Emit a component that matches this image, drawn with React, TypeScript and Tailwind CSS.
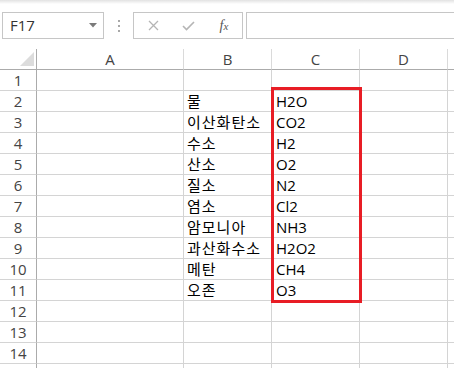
import React from "react";

const rows: [string, string][] = [
  ["", ""],
  ["물", "H2O"],
  ["이산화탄소", "CO2"],
  ["수소", "H2"],
  ["산소", "O2"],
  ["질소", "N2"],
  ["염소", "Cl2"],
  ["암모니아", "NH3"],
  ["과산화수소", "H2O2"],
  ["메탄", "CH4"],
  ["오존", "O3"],
  ["", ""],
  ["", ""],
  ["", ""],
];

const gridCols = "grid grid-cols-[37px_147px_88px_88px_88px_1fr]";
const uiFont = "font-['Open_Sans','Noto_Sans',sans-serif]";
const cellFont = "font-['Open_Sans','Noto_Sans_CJK_KR',sans-serif]";

function Toolbar() {
  return (
    <div className="h-[49px] bg-white">
      <div className="h-[4px] bg-gradient-to-b from-[#e2e2e2] to-white" />
      <div className="flex items-start pt-[8px]">
        {/* name box */}
        <div className="ml-[2px] flex h-[27px] w-[102px] items-center justify-between border border-[#c6c6c6] bg-white pl-[7px] pr-[6px]">
          <span className={`${uiFont} text-[15px] text-[#333]`}>F17</span>
          <svg width="8" height="5" viewBox="0 0 8 5">
            <path d="M0 0 L8 0 L4 4.5 Z" fill="#7a7a7a" />
          </svg>
        </div>
        {/* dots */}
        <div className="ml-[14px] flex h-[27px] flex-col items-center justify-center gap-[3px]">
          <span className="block h-[2px] w-[2px] bg-[#a8a8a8]" />
          <span className="block h-[2px] w-[2px] bg-[#a8a8a8]" />
          <span className="block h-[2px] w-[2px] bg-[#a8a8a8]" />
        </div>
        {/* formula buttons */}
        <div className="ml-[13px] flex h-[27px] w-[110px] items-center border border-[#c6c6c6] bg-white">
          <div className="flex w-[36px] justify-center pl-[2px]">
            <svg width="11" height="11" viewBox="0 0 11 11">
              <path d="M1 1 L10 10 M10 1 L1 10" stroke="#b5b5b5" strokeWidth="1.3" />
            </svg>
          </div>
          <div className="flex w-[36px] justify-center">
            <svg width="13" height="10" viewBox="0 0 13 10">
              <path d="M1 5 L4.5 8.5 L12 1" stroke="#b5b5b5" strokeWidth="1.6" fill="none" />
            </svg>
          </div>
          <div className="flex w-[36px] justify-center">
            <span className="font-['Liberation_Serif',serif] text-[14px] italic leading-none text-[#555]">
              f<span className="text-[11px]">x</span>
            </span>
          </div>
        </div>
        {/* formula input */}
        <div className="ml-[3px] h-[27px] flex-1 border border-r-0 border-[#c6c6c6] bg-white" />
      </div>
    </div>
  );
}

function HeaderRow() {
  return (
    <div className={`${gridCols} h-[21px]`}>
      <div className="relative border-b border-r border-[#ababab]">
        <svg className="absolute left-[20px] top-[3px]" width="14" height="14" viewBox="0 0 14 14">
          <path d="M14 0 L14 14 L0 14 Z" fill="#dcdcdc" />
        </svg>
      </div>
      {["A", "B", "C", "D", ""].map((c, i) => (
        <div
          key={i}
          className={`flex items-center justify-center border-b border-[#ababab] ${
            i < 4 ? "border-r-[1px] border-r-[#dadada]" : ""
          } ${uiFont} text-[15px] leading-none text-[#444]`}
        >
          {c}
        </div>
      ))}
    </div>
  );
}

function Row({ n, b, c }: { n: number; b: string; c: string }) {
  return (
    <div className={`${gridCols} h-[21px]`}>
      <div
        className={`flex items-center justify-center border-b border-r border-b-[#d4d4d4] border-r-[#ababab] ${uiFont} text-[15px] leading-none text-[#444]`}
      >
        {n}
      </div>
      <div className="border-b border-r border-[#d4d4d4]" />
      <div className={`overflow-visible whitespace-nowrap border-b border-r border-[#d4d4d4] pl-[3px] ${cellFont} text-[15px] leading-[20px] tracking-[1px] text-black`}>
        {b}
      </div>
      <div className={`border-b border-r border-[#d4d4d4] pl-[4px] ${cellFont} text-[15px] leading-[20px] text-black`}>
        {c}
      </div>
      <div className="border-b border-r border-[#d4d4d4]" />
      <div className="border-b border-[#d4d4d4]" />
    </div>
  );
}

export default function App() {
  return (
    <div className="h-[368px] w-[454px] overflow-hidden bg-white">
      <Toolbar />
      <div className="relative">
        <HeaderRow />
        {rows.map(([b, c], i) => (
          <Row key={i} n={i + 1} b={b} c={c} />
        ))}
        <div className={`${gridCols} h-[21px]`}>
          <div className="border-r border-[#ababab]" />
          <div className="border-r border-[#d4d4d4]" />
          <div className="border-r border-[#d4d4d4]" />
          <div className="border-r border-[#d4d4d4]" />
          <div className="border-r border-[#d4d4d4]" />
          <div />
        </div>
        {/* red rectangle shape drawn over C2:C11 */}
        <div className="pointer-events-none absolute left-[271px] top-[38px] h-[216px] w-[91px] border-[3px] border-[#e81d25]" />
      </div>
    </div>
  );
}
